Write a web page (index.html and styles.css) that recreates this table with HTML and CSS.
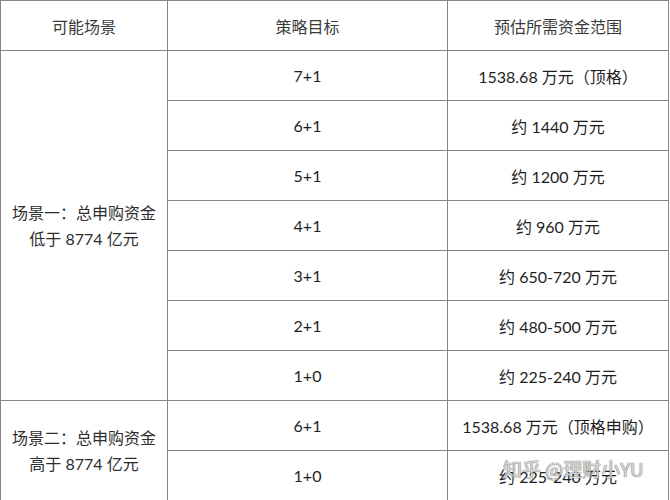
FILE: index.html
```html
<!DOCTYPE html>
<html lang="zh">
<head>
<meta charset="utf-8">
<title>申购策略</title>
<link rel="stylesheet" href="styles.css">
</head>
<body>
<div class="sheet">
  <table class="plan">
    <colgroup>
      <col class="c1">
      <col class="c2">
      <col class="c3">
    </colgroup>
    <thead>
      <tr>
        <th class="head">可能场景</th>
        <th class="head">策略目标</th>
        <th class="head">预估所需资金范围</th>
      </tr>
    </thead>
    <tbody>
      <tr>
        <td class="scene" rowspan="7">场景一：总申购资金<br>低于 8774 亿元</td>
        <td>7+1</td>
        <td>1538.68 万元（顶格）</td>
      </tr>
      <tr><td>6+1</td><td>约 1440 万元</td></tr>
      <tr><td>5+1</td><td>约 1200 万元</td></tr>
      <tr><td>4+1</td><td>约 960 万元</td></tr>
      <tr><td>3+1</td><td>约 650-720 万元</td></tr>
      <tr><td>2+1</td><td>约 480-500 万元</td></tr>
      <tr><td>1+0</td><td>约 225-240 万元</td></tr>
      <tr>
        <td class="scene" rowspan="2">场景二：总申购资金<br>高于 8774 亿元</td>
        <td>6+1</td>
        <td>1538.68 万元（顶格申购）</td>
      </tr>
      <tr><td>1+0</td><td>约 225-240 万元</td></tr>
    </tbody>
  </table>
  <div class="watermark">知乎 @理财小YU</div>
</div>
</body>
</html>
```

FILE: styles.css
```css
html, body {
  margin: 0;
  padding: 0;
  background: #ffffff;
}

.sheet {
  position: relative;
  width: 670px;
  height: 500px;
  overflow: hidden;
}

.plan {
  border-collapse: collapse;
  table-layout: fixed;
  width: 668px;
  font-family: "Lato", "Noto Sans CJK SC", sans-serif;
  font-size: 16px;
  color: #1e1e1e;
}

.c1 { width: 167px; }
.c2 { width: 280px; }
.c3 { width: 221px; }

.plan tr {
  height: 50px;
}

.plan th,
.plan td {
  border: 1px solid #858585;
  padding: 0 4px;
  text-align: center;
  vertical-align: middle;
  font-weight: 400;
  white-space: nowrap;
}

.plan .head {
  color: #3a3a3a;
}

.plan .scene {
  line-height: 26px;
  color: #2e2e2e;
}

.watermark {
  position: absolute;
  left: 503px;
  top: 455px;
  font-family: "Noto Sans CJK SC", sans-serif;
  font-size: 19px;
  color: rgba(255, 255, 255, 0.75);
  text-shadow: 0 0 1px rgba(90, 90, 90, 0.9), 0 0 1px rgba(90, 90, 90, 0.9);
  letter-spacing: 0;
}
```
